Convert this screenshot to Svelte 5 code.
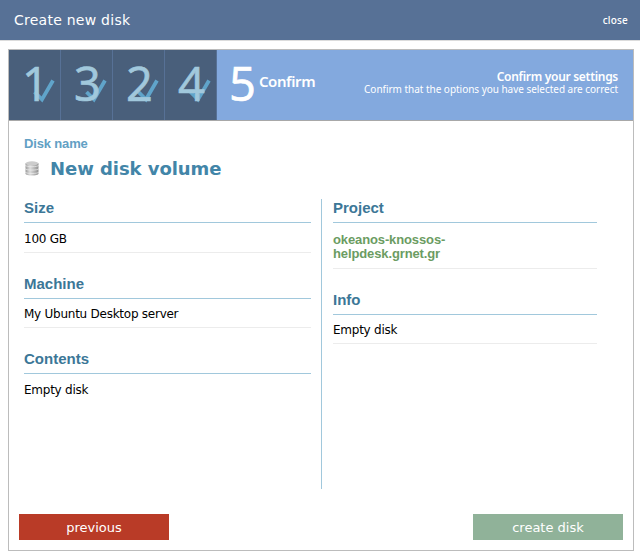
<script lang="ts">
	type Section = { title: string; value: string; project?: boolean };

	const done = [1, 3, 2, 4];

	const left: Section[] = [
		{ title: 'Size', value: '100 GB' },
		{ title: 'Machine', value: 'My Ubuntu Desktop server' },
		{ title: 'Contents', value: 'Empty disk' }
	];

	const right: Section[] = [
		{ title: 'Project', value: 'okeanos-knossos-helpdesk.grnet.gr', project: true },
		{ title: 'Info', value: 'Empty disk' }
	];
</script>

{#snippet section(item: Section)}
	<section>
		<h3>{item.title}</h3>
		<div class="value" class:project={item.project}><span>{item.value}</span></div>
	</section>
{/snippet}

<div class="overlay">
	<header>
		<span class="title">Create new disk</span>
		<button class="close">close</button>
	</header>

	<div class="wizard">
		<div class="steps">
			{#each done as num}
				<div class="step">
					<svg class="check" width="23" height="24" viewBox="0 0 23 24">
						<path d="M1.5 13L9 20.5L20 1.5" fill="none" stroke="#60a4ca" stroke-width="3.8" />
					</svg>
					<span class="num">{num}</span>
				</div>
			{/each}
			<div class="current">
				<span class="num">5</span>
				<span class="label">Confirm</span>
				<div class="help">
					<h4>Confirm your settings</h4>
					<p>Confirm that the options you have selected are correct</p>
				</div>
			</div>
		</div>

		<div class="body">
			<div class="name-label">Disk name</div>
			<div class="name">
				<svg width="14" height="15" viewBox="0 0 14 15">
					<defs>
						<linearGradient id="metal">
							<stop offset="0" stop-color="#999" />
							<stop offset="0.35" stop-color="#ddd" />
							<stop offset="1" stop-color="#909090" />
						</linearGradient>
					</defs>
					<path d="M0.5 2.2v10.3c0 2.8 13 2.8 13 0V2.2z" fill="url(#metal)" />
					<ellipse cx="7" cy="2.3" rx="6.5" ry="2" fill="#ccc" />
					<path d="M0 4.2c1 2 13 2 14 0M0 7.6c1 2 13 2 14 0M0 11c1 2 13 2 14 0" fill="none" stroke="#eee" stroke-width="0.7" />
				</svg>
				<h2>New disk volume</h2>
			</div>

			<div class="columns">
				<div class="col left">
					{#each left as item}
						{@render section(item)}
					{/each}
				</div>
				<div class="col right">
					{#each right as item}
						{@render section(item)}
					{/each}
				</div>
			</div>

			<div class="actions">
				<button class="previous">previous</button>
				<button class="create">create disk</button>
			</div>
		</div>
	</div>
</div>

<style>
	:global(body) {
		margin: 0;
		background: #fff;
	}

	.overlay {
		box-sizing: border-box;
		width: 640px;
		height: 557px;
		background: #fff;
		font-family: Verdana, 'DejaVu Sans', sans-serif;
		color: #000;
	}

	h2, h3, h4, p {
		margin: 0;
	}

	button {
		border: 0;
		padding: 0;
		color: #fff;
		font-family: inherit;
	}

	header {
		box-sizing: border-box;
		display: flex;
		justify-content: space-between;
		align-items: center;
		height: 41px;
		padding: 0 12px 1px 14px;
		background: #577196;
		border-bottom: 1px solid #dcdcdc;
		color: #fff;
	}

	.title {
		font-size: 14px;
		letter-spacing: 0.25px;
	}

	.close {
		background: none;
		font-family: 'Noto Sans', sans-serif;
		font-size: 10px;
		font-weight: 500;
		letter-spacing: 0.2px;
	}

	.wizard {
		box-sizing: border-box;
		width: 626px;
		height: 502px;
		margin: 8px 0 0 8px;
		border: 1px solid #bcbcbc;
	}

	.steps {
		display: flex;
		height: 70px;
		border-bottom: 1px solid #a8a8a8;
		font-family: 'Noto Sans', sans-serif;
	}

	.step {
		position: relative;
		box-sizing: border-box;
		width: 52px;
		height: 70px;
		padding-left: 13px;
		background: #495f7b;
		border-right: 1px solid #577196;
		color: #a1c8dc;
	}

	.num {
		position: relative;
		font-family: 'Open Sans', 'Noto Sans', sans-serif;
		font-size: 47px;
		line-height: 66px;
		-webkit-text-stroke: 0.7px currentColor;
	}

	.check {
		position: absolute;
		left: 24px;
		top: 29px;
	}

	.current {
		display: flex;
		flex: 1;
		padding: 0 15px 0 12px;
		background: #83a9de;
		color: #fff;
	}

	.label {
		margin: 19px 0 0 3px;
		font-size: 15px;
		font-weight: 600;
		line-height: 24px;
		letter-spacing: -0.4px;
	}

	.help {
		margin: 19px 0 0 auto;
		text-align: right;
		white-space: nowrap;
	}

	h4 {
		font-size: 12px;
		font-weight: 600;
		line-height: 15px;
		letter-spacing: -0.3px;
	}

	p {
		font-size: 10px;
		line-height: 11px;
		letter-spacing: -0.03px;
	}

	.body {
		padding: 15px 10px 0 15px;
	}

	.name-label {
		font: bold 13px/16px 'Liberation Sans', Arial, sans-serif;
		letter-spacing: -0.15px;
		color: #62a0c4;
	}

	.name {
		display: flex;
		align-items: center;
		gap: 11px;
		height: 34px;
		padding-left: 1px;
	}

	.name svg {
		margin-bottom: 2px;
	}

	h2 {
		font-size: 18px;
		line-height: 34px;
		letter-spacing: -0.05px;
		color: #4285a8;
	}

	.columns {
		display: flex;
		height: 290px;
		margin-top: 13px;
	}

	.left {
		width: 287px;
		padding-right: 10px;
		border-right: 1px solid #a1c8dc;
	}

	.right {
		width: 264px;
		padding-left: 11px;
	}

	section {
		margin-bottom: 22px;
	}

	h3 {
		height: 23px;
		border-bottom: 1px solid #a1c8dc;
		font: bold 15px/18px 'Liberation Sans', Arial, sans-serif;
		color: #3c7797;
	}

	.value {
		box-sizing: border-box;
		height: 29.5px;
		padding-top: 7.5px;
		border-bottom: 1px solid #ececec;
		font-size: 12px;
		line-height: 16px;
		letter-spacing: -0.25px;
	}

	.right .value {
		height: 29px;
		padding-top: 7px;
	}

	.right .value.project {
		height: 46px;
		padding-top: 10px;
		font: bold 13px/14px 'Liberation Sans', Arial, sans-serif;
		letter-spacing: -0.12px;
		color: #6b9c62;
	}

	.project span {
		display: block;
		width: 130px;
	}

	.left section:last-child .value {
		padding-top: 8px;
		border-bottom: 0;
	}

	.actions {
		display: flex;
		justify-content: space-between;
		margin: 25px 0 0 -5px;
	}

	.actions button {
		width: 150px;
		height: 26px;
		font-size: 13px;
	}

	.previous {
		background: #b93b27;
	}

	.create {
		background: #90b299;
	}
</style>
